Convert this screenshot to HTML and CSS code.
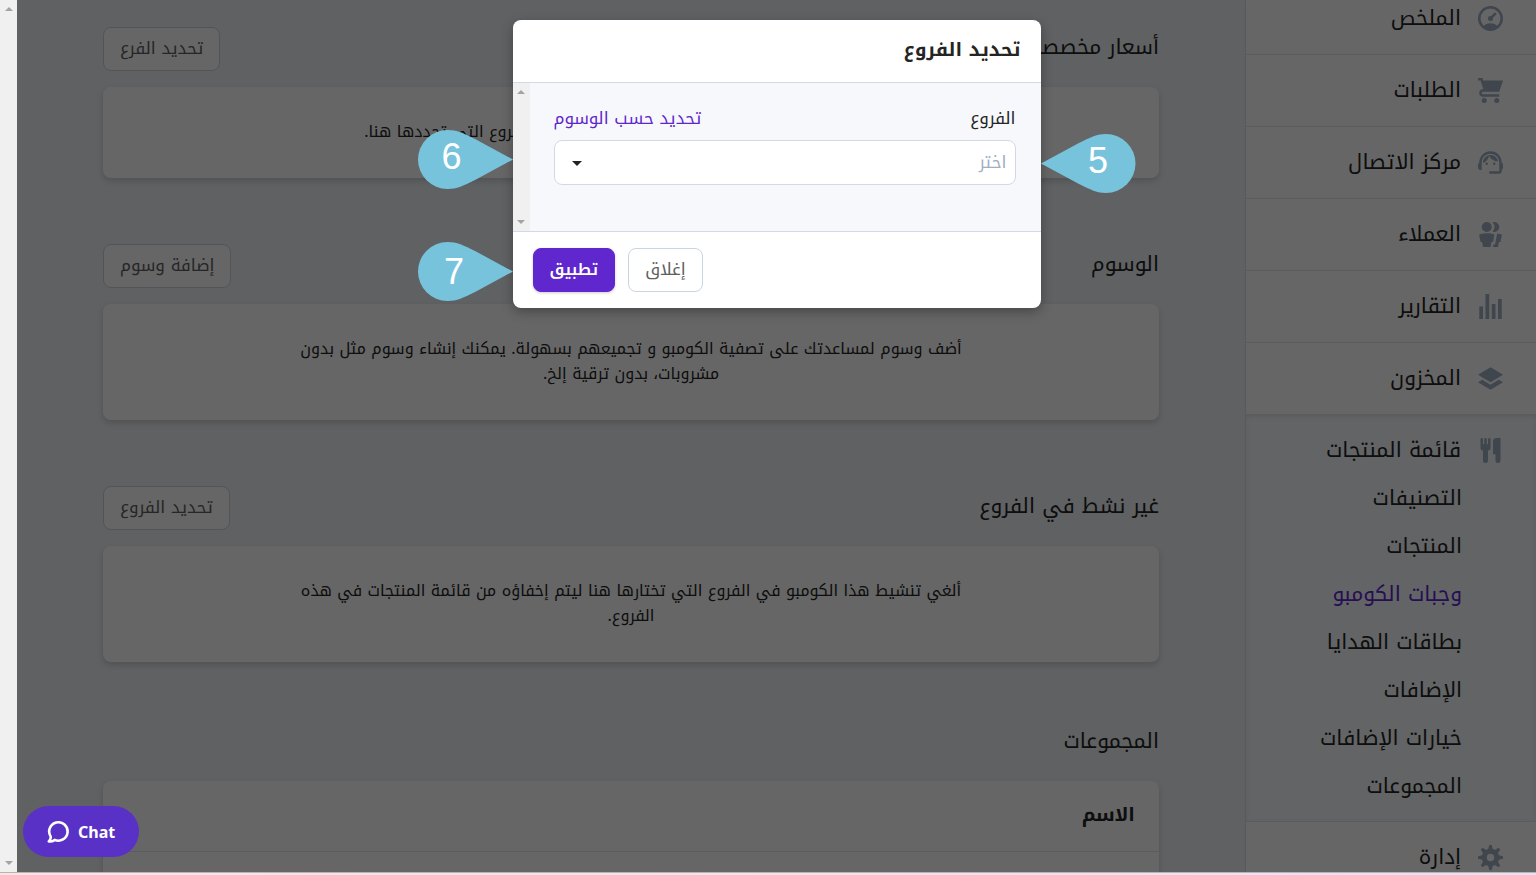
FILE: index.html
```html
<!DOCTYPE html>
<html lang="ar" dir="rtl">
<head>
    <meta charset="UTF-8">
    <meta name="viewport" content="width=device-width, initial-scale=1.0">
    <title>وجبات الكومبو</title>
    <link rel="stylesheet" href="styles.css">
</head>
<body>
    <div class="window">
        <div class="app">
            <nav class="sidebar">
                <ul class="nav-list">
                    <li class="nav-item">
                        <a href="#">
                            <svg class="icon" viewBox="0 0 20 20"><path d="M10 20a10 10 0 1 1 0-20 10 10 0 0 1 0 20zm-5.6-4.29a9.95 9.95 0 0 1 11.2 0 8 8 0 1 0-11.2 0zm6.12-7.64l3.02-3.02 1.41 1.41-3.02 3.02a2 2 0 1 1-1.41-1.41z"/></svg>
                            الملخص
                        </a>
                    </li>
                    <li class="nav-item">
                        <a href="#">
                            <svg class="icon" viewBox="0 0 20 20"><path d="M4 2h16l-3 9H4a1 1 0 1 0 0 2h13v2H4a3 3 0 0 1 0-6h.33L3 5 2 2H0V0h3a1 1 0 0 1 1 1v1zm1 18a2 2 0 1 1 0-4 2 2 0 0 1 0 4zm10 0a2 2 0 1 1 0-4 2 2 0 0 1 0 4z"/></svg>
                            الطلبات
                        </a>
                    </li>
                    <li class="nav-item">
                        <a href="#">
                            <svg class="icon" viewBox="2 2 20 20"><path d="M21 12.22C21 6.73 16.74 3 12 3c-4.69 0-9 3.65-9 9.28-.6.34-1 .98-1 1.72v2c0 1.1.9 2 2 2h1v-6.1c0-3.87 3.13-7 7-7s7 3.13 7 7V19h-8v2h8c1.1 0 2-.9 2-2v-1.22c.59-.31 1-.92 1-1.64v-2.3c0-.7-.41-1.31-1-1.62z"/><circle cx="9" cy="13" r="1"/><circle cx="15" cy="13" r="1"/><path d="M18 11.03C17.52 8.18 15.04 6 12.05 6c-3.03 0-6.29 2.51-6.03 6.45 2.47-1.01 4.33-3.21 4.86-5.89 1.31 2.63 4 4.44 7.12 4.47z"/></svg>
                            مركز الاتصال
                        </a>
                    </li>
                    <li class="nav-item">
                        <a href="#">
                            <svg class="icon" viewBox="0 0 20 20"><path d="M7 8a4 4 0 1 1 0-8 4 4 0 0 1 0 8zm0 1c2.15 0 4.2.4 6.1 1.09L12 16h-1.25L10 20H4l-.75-4H2L.9 10.09A17.93 17.93 0 0 1 7 9zm8.31.17c1.32.18 2.59.48 3.8.92L18 16h-1.25L16 20h-3.96l.37-2h1.25l1.65-8.83zM13 0a4 4 0 1 1-1.33 7.76 5.96 5.96 0 0 0 0-7.52C12.1.1 12.53 0 13 0z"/></svg>
                            العملاء
                        </a>
                    </li>
                    <li class="nav-item">
                        <a href="#">
                            <svg class="icon" viewBox="0 0 20 20"><path d="M1 10h3v10H1V10zM6 0h3v20H6V0zm5 8h3v12h-3V8zm5-4h3v16h-3V4z"/></svg>
                            التقارير
                        </a>
                    </li>
                    <li class="nav-item">
                        <a href="#">
                            <svg class="icon" viewBox="0 0 20 20"><path d="M10 1l10 6-10 6L0 7l10-6zm6.67 10L20 13l-10 6-10-6 3.33-2L10 15l6.67-4z"/></svg>
                            المخزون
                        </a>
                    </li>
                    <li class="nav-item open">
                        <a href="#">
                            <svg class="icon" viewBox="0 0 20 20"><path d="M18 11v7a2 2 0 0 1-4 0v-5h-2V3a3 3 0 0 1 3-3h3v11zM4 10a2 2 0 0 1-2-2V1a1 1 0 0 1 2 0v4h1V1a1 1 0 0 1 2 0v4h1V1a1 1 0 0 1 2 0v7a2 2 0 0 1-2 2v8a2 2 0 0 1-4 0v-8z"/></svg>
                            قائمة المنتجات
                        </a>
                        <ul class="subnav">
                            <li><a href="#">التصنيفات</a></li>
                            <li><a href="#">المنتجات</a></li>
                            <li><a href="#" class="active">وجبات الكومبو</a></li>
                            <li><a href="#">بطاقات الهدايا</a></li>
                            <li><a href="#">الإضافات</a></li>
                            <li><a href="#">خيارات الإضافات</a></li>
                            <li><a href="#">المجموعات</a></li>
                        </ul>
                    </li>
                    <li class="nav-item">
                        <a href="#">
                            <svg class="icon" viewBox="0 0 20 20"><path d="M3.94 6.5L2.22 3.64l1.42-1.42L6.5 3.94c.52-.3 1.1-.54 1.7-.7L9 0h2l.8 3.24c.6.16 1.18.4 1.7.7l2.86-1.72 1.42 1.42-1.72 2.86c.3.52.54 1.1.7 1.7L20 9v2l-3.24.8c-.16.6-.4 1.18-.7 1.7l1.72 2.86-1.42 1.42-2.86-1.72c-.52.3-1.1.54-1.7.7L11 20H9l-.8-3.24c-.6-.16-1.18-.4-1.7-.7l-2.86 1.72-1.42-1.42 1.72-2.86c-.3-.52-.54-1.1-.7-1.7L0 11V9l3.24-.8c.16-.6.4-1.18.7-1.7zM10 13a3 3 0 1 0 0-6 3 3 0 0 0 0 6z"/></svg>
                            إدارة
                        </a>
                    </li>
                </ul>
            </nav>

            <main class="content">
                <section class="section">
                    <div class="section-header">
                        <h2>أسعار مخصصة للفروع</h2>
                        <button class="btn">تحديد الفرع</button>
                    </div>
                    <div class="card empty">
                        <p>أضف أسعار مخصصة لهذا الكومبو ليتم تطبيقها في الفروع التي تحددها هنا.</p>
                    </div>
                </section>

                <section class="section">
                    <div class="section-header">
                        <h2>الوسوم</h2>
                        <button class="btn">إضافة وسوم</button>
                    </div>
                    <div class="card empty">
                        <p>أضف وسوم لمساعدتك على تصفية الكومبو و تجميعهم بسهولة. يمكنك إنشاء وسوم مثل بدون مشروبات، بدون ترقية إلخ.</p>
                    </div>
                </section>

                <section class="section">
                    <div class="section-header">
                        <h2>غير نشط في الفروع</h2>
                        <button class="btn">تحديد الفروع</button>
                    </div>
                    <div class="card empty">
                        <p>ألغي تنشيط هذا الكومبو في الفروع التي تختارها هنا ليتم إخفاؤه من قائمة المنتجات في هذه الفروع.</p>
                    </div>
                </section>

                <section class="section">
                    <div class="section-header plain">
                        <h2>المجموعات</h2>
                    </div>
                    <div class="card">
                        <table class="groups">
                            <thead>
                                <tr><th>الاسم</th></tr>
                            </thead>
                            <tbody>
                                <tr><td></td></tr>
                            </tbody>
                        </table>
                    </div>
                </section>
            </main>

            <div class="overlay">
                <div class="modal" role="dialog" aria-labelledby="modal-title">
                    <h3 class="modal-header" id="modal-title">تحديد الفروع</h3>
                    <div class="modal-body">
                        <div class="modal-form">
                            <div class="field-top">
                                <label for="branches">الفروع</label>
                                <a href="#">تحديد حسب الوسوم</a>
                            </div>
                            <div class="select-wrap">
                                <select id="branches">
                                    <option>اختر</option>
                                </select>
                                <svg class="caret" viewBox="0 0 10 5"><path d="M0 0h10L5 5z"/></svg>
                            </div>
                        </div>
                        <div class="scrollbar">
                            <svg viewBox="0 0 8 4"><path d="M0 4h8L4 0z"/></svg>
                            <svg viewBox="0 0 8 4"><path d="M0 0h8L4 4z"/></svg>
                        </div>
                    </div>
                    <div class="modal-footer">
                        <button class="btn">إغلاق</button>
                        <button class="btn primary">تطبيق</button>
                    </div>

                    <div class="pin pin-5">
                        <svg viewBox="0 0 95 59"><path d="M0 29.500L37 9.500C50 3 56 0 65 0a29.500 29.500 0 0 1 0 59C56 59 50 56 37 49.500z"/></svg>
                        <span>5</span>
                    </div>
                    <div class="pin pin-6">
                        <svg viewBox="0 0 95 59"><path d="M95 29.500L58 9.500C45 3 39 0 29.500 0a29.500 29.500 0 0 0 0 59C39 59 45 56 58 49.500z"/></svg>
                        <span>6</span>
                    </div>
                    <div class="pin pin-7">
                        <svg viewBox="0 0 95 59"><path d="M95 29.500L58 9.500C45 3 39 0 29.500 0a29.500 29.500 0 0 0 0 59C39 59 45 56 58 49.500z"/></svg>
                        <span>7</span>
                    </div>
                </div>
            </div>

            <button class="chat" dir="ltr">
                <svg viewBox="0 0 22 22"><path d="M3.600 15.400A9.200 9.200 0 1 1 7.600 18.900C6 20.200 4 20.700 1.800 20.400 3.400 18.900 4 17.300 3.600 15.400z"/></svg>
                Chat
            </button>
        </div>

        <div class="scrollbar">
            <svg viewBox="0 0 8 4"><path d="M0 4h8L4 0z"/></svg>
            <svg viewBox="0 0 8 4"><path d="M0 0h8L4 4z"/></svg>
        </div>
    </div>
    <div class="bottom-strip"></div>
</body>
</html>
```
FILE: styles.css
```css
* {
    box-sizing: border-box;
}

body {
    margin: 0;
    height: 100vh;
    display: flex;
    flex-direction: column;
    overflow: hidden;
    font-family: "Noto Kufi Arabic", "Noto Sans Arabic", "Noto Sans", "DejaVu Sans", sans-serif;
    font-size: 17px;
    line-height: 25px;
    color: #252525;
}

a {
    color: inherit;
    text-decoration: none;
}

ul {
    list-style: none;
    margin: 0;
    padding: 0;
}

h2, h3, p {
    margin: 0;
}

.window {
    flex: 1;
    min-height: 0;
    display: flex;
}

.app {
    flex: 1;
    min-width: 0;
    display: flex;
    position: relative;
    overflow: hidden;
    background-color: #edf2f7;
}

/* Sidebar */
.sidebar {
    width: 290px;
    flex-shrink: 0;
    background-color: #fff;
    box-shadow: 0 0 2px rgba(0, 0, 0, 0.2);
}

.nav-list {
    margin-top: -17px;
}

.nav-item {
    border-bottom: 1px solid #e2e8f0;
    font-size: 21px;
}

.nav-item > a {
    display: flex;
    align-items: center;
    gap: 17px;
    height: 71px;
    padding: 0 33px;
}

.nav-item.open {
    background-color: #f7fafc;
    box-shadow: inset 0 2px 4px rgba(0, 0, 0, 0.08);
    padding-bottom: 11px;
}

.icon {
    width: 25px;
    height: 25px;
    fill: #a0aec0;
}

.subnav {
    margin-top: -12px;
    padding-right: 74px;
}

.subnav a {
    display: block;
    line-height: 48px;
}

.subnav .active {
    color: #5f27cd;
}

/* Content */
.content {
    flex: 1;
    min-width: 0;
    padding: 27px 87px 0 86px;
}

.section {
    margin-bottom: 66px;
}

.section-header {
    display: flex;
    justify-content: space-between;
    align-items: center;
    margin-bottom: 16px;
}

.section-header.plain {
    align-items: flex-start;
    min-height: 37px;
}

.section-header h2 {
    padding-bottom: 4px;
    font-size: 21px;
    font-weight: 400;
    line-height: 26px;
}

.btn {
    height: 44px;
    padding: 0 16px 2px;
    font: inherit;
    color: #606060;
    background-color: #fff;
    border: 1px solid #cbd5e0;
    border-radius: 8px;
    cursor: pointer;
}

.btn.primary {
    font-size: 16px;
    font-weight: 600;
    color: #fff;
    background-color: #5f27cd;
    border-color: #5f27cd;
    box-shadow: 0 1px 3px rgba(0, 0, 0, 0.2);
}

.card {
    background-color: #fff;
    border-radius: 8px;
    box-shadow: 0 3px 6px rgba(0, 0, 0, 0.16);
}

.card.empty {
    padding: 32px 0 34px;
    font-size: 16px;
    text-align: center;
}

.card.empty p {
    width: 66%;
    margin: 0 auto;
}

.groups {
    width: 100%;
    border-collapse: collapse;
}

.groups th {
    height: 70px;
    padding: 0 24px;
    font-size: 19px;
    font-weight: 700;
    text-align: right;
    border-bottom: 1px solid #e2e8f0;
}

.groups td {
    height: 70px;
}

/* Modal */
.overlay {
    position: absolute;
    inset: 0;
    display: flex;
    justify-content: center;
    align-items: flex-start;
    padding-top: 20px;
    background-color: rgba(0, 0, 0, 0.6);
}

.modal {
    position: relative;
    width: 528px;
    background-color: #fff;
    border-radius: 8px;
    box-shadow: 0 4px 12px rgba(0, 0, 0, 0.3);
}

.modal-header {
    padding: 16px 20px 17px;
    font-size: 19px;
    font-weight: 700;
    line-height: 29px;
}

.modal-body {
    display: flex;
    background-color: #f7f8fc;
    border-top: 1px solid #d2d9e6;
    border-bottom: 1px solid #d2d9e6;
}

.modal-form {
    flex: 1;
    padding: 23px 25px 46px 24px;
}

.field-top {
    display: flex;
    justify-content: space-between;
    margin-bottom: 9px;
}

.field-top a {
    color: #5f27cd;
}

.select-wrap {
    position: relative;
}

.select-wrap select {
    display: block;
    width: 100%;
    height: 45px;
    padding: 0 8px;
    font: inherit;
    color: #a0aec0;
    background-color: #fff;
    border: 1px solid #d2d9e6;
    border-radius: 8px;
    appearance: none;
}

.caret {
    position: absolute;
    left: 18px;
    top: 21px;
    width: 10px;
    height: 5px;
    fill: #222;
}

.modal-footer {
    display: flex;
    justify-content: flex-end;
    gap: 13px;
    padding: 16px 20px;
}

.scrollbar {
    display: flex;
    flex-direction: column;
    justify-content: space-between;
    align-items: center;
    width: 17px;
    padding: 7px 0;
    background-color: #f0f0f0;
}

.scrollbar svg {
    width: 8px;
    height: 4px;
    fill: #a3a3a3;
}

/* Numbered pins beside the modal */
.pin {
    position: absolute;
    width: 95px;
    height: 59px;
    font-family: "Liberation Sans", Arial, sans-serif;
    font-size: 36px;
    line-height: 54px;
    text-align: center;
    color: #fff;
}

.pin svg {
    position: absolute;
    inset: 0;
    width: 95px;
    height: 59px;
    fill: #78c3dc;
}

.pin span {
    position: relative;
}

.pin-5 {
    left: 100%;
    top: 114px;
    padding-left: 20px;
}

.pin-6 {
    right: 100%;
    top: 110px;
    padding-right: 27px;
}

.pin-7 {
    right: 100%;
    top: 222px;
    padding-right: 22px;
    line-height: 60px;
}

/* Chat */
.chat {
    position: absolute;
    left: 6px;
    bottom: 15px;
    display: flex;
    align-items: center;
    gap: 9px;
    height: 51px;
    padding: 0 24px;
    font-family: "Noto Sans", sans-serif;
    font-size: 16px;
    font-weight: 700;
    color: #fff;
    background-color: #5a31c6;
    border: none;
    border-radius: 26px;
    cursor: pointer;
}

.chat svg {
    width: 22px;
    height: 22px;
    fill: none;
    stroke: #fff;
    stroke-width: 2.6;
    stroke-linejoin: round;
}

.bottom-strip {
    height: 3px;
    border-top: 1px solid #b9b3b8;
    background: linear-gradient(to right, #fbe6e2, #e6e2f3);
}
```
